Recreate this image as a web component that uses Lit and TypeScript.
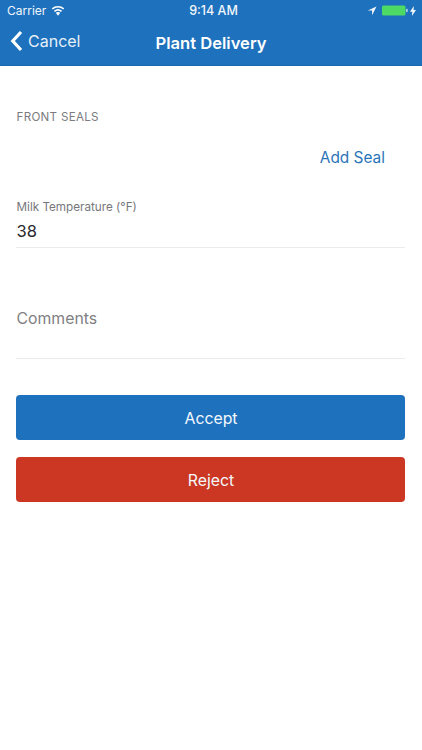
import { LitElement, html, css } from "lit";
import { customElement } from "lit/decorators.js";

@customElement("app-root")
export class AppRoot extends LitElement {
  static styles = css`
    :host {
      display: block;
      width: 422px;
      height: 750px;
      background: #fff;
      font-family: Inter, "Liberation Sans", Arial, sans-serif;
      overflow: hidden;
    }
    .header {
      height: 65px;
      background: #1e71bd;
      color: #fff;
      border-bottom: 1px solid #1c68ad;
      display: flex;
      flex-direction: column;
    }
    .status {
      height: 21px;
      padding: 0 6px 0 7px;
      display: grid;
      grid-template-columns: 1fr auto 1fr;
      align-items: center;
      font-size: 12px;
      color: #f1f6fb;
    }
    .status-left { display: flex; align-items: center; gap: 5px; }
    .status-right { display: flex; align-items: center; justify-content: flex-end; }
    .arrow { margin-right: 5px; }
    .time { font-weight: 500; font-size: 12.5px; margin-left: 4px; }
    .nav {
      flex: 1;
      display: grid;
      grid-template-columns: 1fr auto 1fr;
      align-items: center;
    }
    .back {
      display: flex;
      align-items: center;
      gap: 5px;
      padding-left: 10px;
      font-size: 16px;
      color: #e6f0f9;
      margin-top: -5px;
    }
    .title { font-size: 16.6px; font-weight: 600; }
    .battery { display: flex; align-items: center; margin-right: 2px; }
    .content { padding: 0 17px 0 16px; }
    .section {
      margin-top: 44px;
      padding-left: 0.5px;
      font-size: 11.6px;
      line-height: 14px;
      letter-spacing: 0.3px;
      color: #7b7b7f;
    }
    .add-row {
      display: flex;
      justify-content: flex-end;
      padding: 24px 20px 0 0;
      font-size: 15.4px;
      line-height: 20px;
      color: #2a75b8;
    }
    .field-label {
      margin-top: 31px;
      padding-left: 0.5px;
      font-size: 11.7px;
      line-height: 16px;
      color: #77777b;
    }
    .value {
      margin-top: 5px;
      padding-bottom: 4px;
      padding-left: 0.5px;
      font-size: 16.5px;
      line-height: 23px;
      color: #26262a;
      border-bottom: 1px solid #ececee;
    }
    .comments {
      margin-top: 61px;
      height: 49px;
      padding-left: 0.5px;
      font-size: 15.8px;
      line-height: 20px;
      color: #808084;
      border-bottom: 1px solid #ececee;
    }
    .buttons { margin-top: 36px; display: flex; flex-direction: column; gap: 17px; }
    .btn {
      height: 45px;
      box-sizing: border-box;
      padding: 1px 0 0 1px;
      border-radius: 4px;
      color: #f4f8fc;
      font-size: 15.8px;
      display: flex;
      align-items: center;
      justify-content: center;
    }
    .accept { background: #1e71bd; }
    .reject { background: #cb3722; }
  `;

  render() {
    return html`
      <div class="header">
        <div class="status">
          <div class="status-left">
            <span>Carrier</span>
            <svg width="14" height="11" viewBox="0 0 13 10">
              <path d="M6.5 9.8 4.4 7.2a3.2 3.2 0 0 1 4.2 0z" fill="#fff" />
              <path d="M3.2 5.8a5.2 5.2 0 0 1 6.6 0M1.2 3.4a8.2 8.2 0 0 1 10.6 0" fill="none" stroke="#fff" stroke-width="1.5" />
            </svg>
          </div>
          <span class="time">9:14 AM</span>
          <div class="status-right">
            <svg class="arrow" width="10" height="10" viewBox="0 0 10 10"><path d="M9.5.5 .8 4.6h4.3v4.6z" fill="#f2f6fb" /></svg>
            <div class="battery">
              <svg width="26" height="11" viewBox="0 0 26 11">
                <rect x="0" y="0.5" width="23.5" height="10" rx="1.5" fill="#4cd964" />
                <rect x="24.2" y="3.8" width="1.4" height="3.4" rx=".6" fill="#cfe3f2" />
              </svg>
            </div>
            <svg width="6" height="10" viewBox="0 0 6 10"><path d="M3.8 0 0 5.8h2.3L1.9 10 6 4h-2.4z" fill="#f2f6fb" /></svg>
          </div>
        </div>
        <div class="nav">
          <div class="back">
            <svg width="13" height="22" viewBox="0 0 13 22"><path d="M11 2 2.8 11 11 20" fill="none" stroke="#fff" stroke-width="3.2" /></svg>
            <span>Cancel</span>
          </div>
          <div class="title">Plant Delivery</div>
          <div></div>
        </div>
      </div>
      <div class="content">
        <div class="section">FRONT SEALS</div>
        <div class="add-row">Add Seal</div>
        <div class="field-label">Milk Temperature (°F)</div>
        <div class="value">38</div>
        <div class="comments">Comments</div>
        <div class="buttons">
          <div class="btn accept">Accept</div>
          <div class="btn reject">Reject</div>
        </div>
      </div>
    `;
  }
}
